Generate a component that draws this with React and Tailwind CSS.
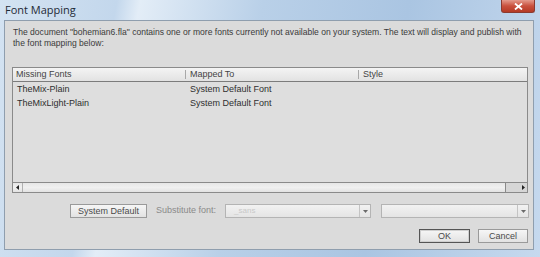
import React from 'react';

const headers = ['Missing Fonts', 'Mapped To', 'Style'];
const rows = [
  { name: 'TheMix-Plain', mapped: 'System Default Font' },
  { name: 'TheMixLight-Plain', mapped: 'System Default Font' },
];

function Caret({ className = '' }) {
  return (
    <svg width="5" height="3" viewBox="0 0 5 3" className={className}>
      <path d="M0 0h5L2.5 3z" fill="#6a6a6a" />
    </svg>
  );
}

function Dropdown({ width, value }) {
  return (
    <div className={`${width} h-[14px] flex border border-[#b4b4b4] bg-[linear-gradient(#f2f2f2,#e4e4e4)]`}>
      <div className="flex-1 flex items-center pl-[8px] text-[8px] text-[#c8c8c8]">{value}</div>
      <div className="w-[11px] flex items-center justify-center border-l border-[#c4c4c4]">
        <Caret />
      </div>
    </div>
  );
}

function Button({ children, className = '' }) {
  return (
    <button className={`h-[14px] border border-[#9a9a9a] bg-[linear-gradient(#f6f6f6,#e2e2e2)] text-[9px] text-[#4a4a4a] leading-none flex items-center justify-center ${className}`}>
      {children}
    </button>
  );
}

export default function App() {
  return (
    <div
      className="w-[540px] h-[257px] overflow-hidden flex flex-col bg-[linear-gradient(100deg,#d4e3f2_0%,#c3d7ec_20%,#e3edf7_24%,#b9d0e8_45%,#aac5e2_70%,#c6d9ee_100%)]"
      style={{ fontFamily: '"Liberation Sans", Arial, sans-serif' }}
    >
      {/* Title bar */}
      <div className="h-[20px] flex items-start relative shrink-0">
        <span className="pl-[5px] pt-[3px] text-[11px] text-[#1e2a36] leading-[14px]" style={{ fontFamily: '"Open Sans", sans-serif' }}>
          Font Mapping
        </span>
        <div className="absolute right-[5px] top-0 w-[34px] h-[13px] rounded-b-[3px] border border-[#8b3a30] border-t-0 bg-[linear-gradient(#e49a8c,#c9503d_50%,#b43a26)] flex items-center justify-center">
          <svg width="9" height="7" viewBox="0 0 9 7">
            <path d="M1 0.5l7 6M8 0.5l-7 6" stroke="#fff" strokeWidth="1.8" />
          </svg>
        </div>
      </div>

      {/* Client area */}
      <div className="ml-[4px] w-[530px] h-[230px] border border-[#8f9eae] bg-[#dbdbdb] flex flex-col text-[#333]">
        <p className="ml-[8px] mt-[6px] text-[8.55px] leading-[11px] whitespace-nowrap text-[#3a3a3a]">
          The document "bohemian6.fla" contains one or more fonts currently not available on your system. The text will display and publish with
          <br />
          the font mapping below:
        </p>

        {/* Font list */}
        <div className="ml-[7px] mt-[18px] w-[516px] h-[126px] border border-[#8a8a8a] bg-[#dedede] flex flex-col">
          <div className="h-[14px] flex border-b border-[#7c7c7c] bg-[linear-gradient(#f4f4f4,#e2e2e2)] text-[9px] text-[#444]">
            <div className="w-[172px] flex items-center pl-[3px]">{headers[0]}</div>
            <div className="w-[173px] flex items-center pl-[4px] border-l border-[#a8a8a8] my-[2px]">{headers[1]}</div>
            <div className="flex-1 flex items-center pl-[4px] border-l border-[#a8a8a8] my-[2px]">{headers[2]}</div>
          </div>
          <div className="flex-1 flex flex-col pt-[1px]">
            {rows.map((r) => (
              <div key={r.name} className="h-[14px] flex items-center text-[9px] text-[#2e2e2e]">
                <div className="w-[172px] pl-[4px]">{r.name}</div>
                <div className="w-[173px] pl-[5px]">{r.mapped}</div>
              </div>
            ))}
          </div>
          {/* Horizontal scrollbar */}
          <div className="h-[10px] flex border-t border-[#8a8a8a] bg-[linear-gradient(#e6e6e6,#f0f0f0_50%,#e2e2e2)]">
            <div className="w-[10px] flex items-center justify-center border-r border-[#b0b0b0]">
              <svg width="3" height="5" viewBox="0 0 3 5"><path d="M3 0v5L0 2.5z" fill="#222" /></svg>
            </div>
            <div className="flex-1" />
            <div className="w-[22px] flex items-center justify-end pr-[2px] border-l border-[#8a8a8a] bg-[#d6d6d6]">
              <svg width="3" height="5" viewBox="0 0 3 5"><path d="M0 0v5L3 2.5z" fill="#222" /></svg>
            </div>
          </div>
        </div>

        {/* Substitute row */}
        <div className="mt-[11px] flex items-center">
          <Button className="ml-[65px] w-[77px]">System Default</Button>
          <span className="ml-[9px] text-[9px] text-[#8a8a8a]">Substitute font:</span>
          <div className="ml-[9px]">
            <Dropdown width="w-[146px]" value="_sans" />
          </div>
          <div className="ml-[10px]">
            <Dropdown width="w-[148px]" value="" />
          </div>
        </div>

        {/* Action buttons */}
        <div className="mt-[11px] flex justify-end pr-[5px] gap-[8px]">
          <Button className="w-[51px] border-[#555] shadow-[inset_0_0_0_1px_#cfcfcf]">OK</Button>
          <Button className="w-[50px]">Cancel</Button>
        </div>
      </div>
    </div>
  );
}
